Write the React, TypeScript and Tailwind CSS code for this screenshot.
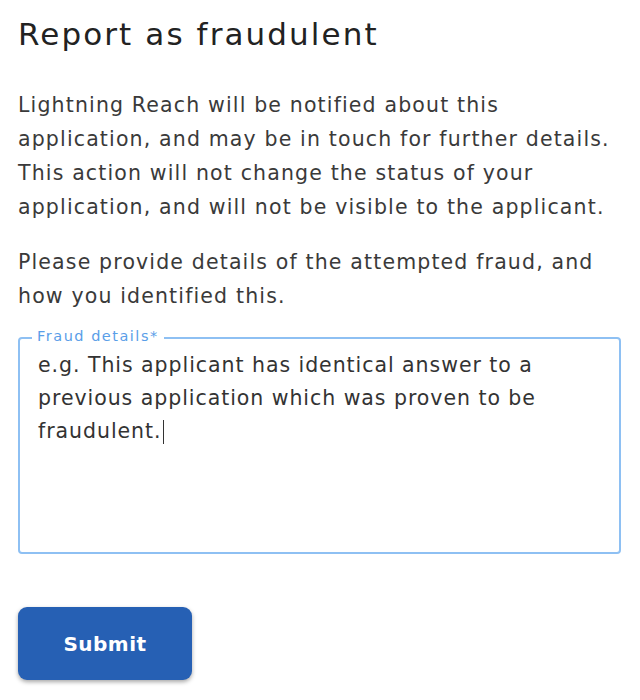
import React from "react";

export default function App() {
  return (
    <div className="w-[640px] h-[700px] bg-white px-[18px] pt-[12px] text-[#333]" style={{ fontFamily: '"DejaVu Sans", "Open Sans", sans-serif' }}>
      <h1 className="text-[31px] leading-[44px] font-normal tracking-[2.1px] text-[#222]">Report as fraudulent</h1>
      <p className="mt-[32px] text-[20.5px] leading-[34px] tracking-[1.15px] text-[#3a3a3a] whitespace-nowrap">
        Lightning Reach will be notified about this<br />
        application, and may be in touch for further details.<br />
        This action will not change the status of your<br />
        application, and will not be visible to the applicant.
      </p>
      <p className="mt-[21px] text-[20.5px] leading-[34px] tracking-[1.15px] text-[#3a3a3a] whitespace-nowrap">
        Please provide details of the attempted fraud, and<br />
        how you identified this.
      </p>
      <div className="relative mt-[24px] w-[603px] h-[217px] rounded-[4px] border-2 border-[#8ec0f3]">
        <span className="absolute left-[12px] top-[-11px] bg-white px-[5px] text-[14.5px] leading-[16px] tracking-[1.5px] text-[#5a9ee8]">Fraud details*</span>
        <div className="pt-[10px] pl-[18px] text-[20.5px] leading-[33px] tracking-[0.95px] text-[#333] whitespace-nowrap">
          e.g. This applicant has identical answer to a<br />
          previous application which was proven to be<br />
          fraudulent.<span className="inline-block w-[1px] h-[24px] bg-[#333] align-middle ml-[1px]"></span>
        </div>
      </div>
      <button className="mt-[53px] w-[174px] h-[73px] rounded-[9px] bg-[#2660b4] text-white text-[20px] tracking-[0.5px] font-bold shadow-[0_2px_4px_rgba(0,0,0,0.35)]">
        Submit
      </button>
    </div>
  );
}
